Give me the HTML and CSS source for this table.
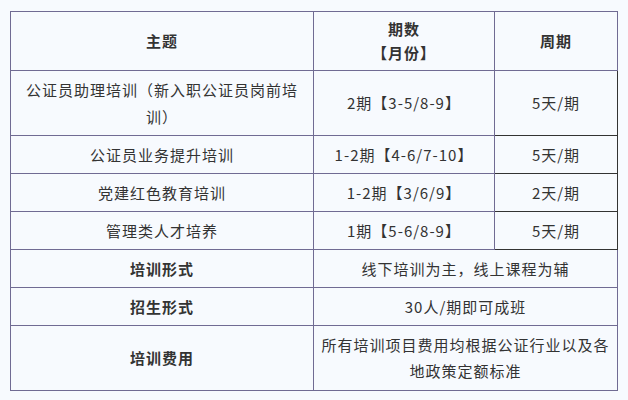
FILE: index.html
```html
<!DOCTYPE html>
<html lang="zh-CN">
<head>
<meta charset="utf-8">
<link rel="stylesheet" href="styles.css">
</head>
<body>
<table class="plan">
  <colgroup>
    <col class="c1">
    <col class="c2">
    <col class="c3">
  </colgroup>
  <tr class="head">
    <th>主题</th>
    <th>期数<br>【月份】</th>
    <th>周期</th>
  </tr>
  <tr class="tall">
    <td class="wide">公证员助理培训（新入职公证员岗前培训）</td>
    <td>2期【3-5/8-9】</td>
    <td class="dark">5天/期</td>
  </tr>
  <tr>
    <td>公证员业务提升培训</td>
    <td>1-2期【4-6/7-10】</td>
    <td class="dark">5天/期</td>
  </tr>
  <tr>
    <td>党建红色教育培训</td>
    <td>1-2期【3/6/9】</td>
    <td class="dark">2天/期</td>
  </tr>
  <tr>
    <td>管理类人才培养</td>
    <td>1期【5-6/8-9】</td>
    <td class="dark">5天/期</td>
  </tr>
  <tr>
    <td class="b">培训形式</td>
    <td colspan="2">线下培训为主，线上课程为辅</td>
  </tr>
  <tr>
    <td class="b">招生形式</td>
    <td colspan="2">30人/期即可成班</td>
  </tr>
  <tr class="tall">
    <td class="b">培训费用</td>
    <td colspan="2" class="merged">所有培训项目费用均根据公证行业以及各地政策定额标准</td>
  </tr>
</table>
</body>
</html>
```

FILE: styles.css
```css
html, body {
  margin: 0;
  background: #f7fafe;
}
body {
  padding: 11px 0 0 10px;
  font-family: "Noto Sans CJK SC", "Noto Sans", sans-serif;
  color: #333;
  font-size: 15px;
  letter-spacing: 1px;
}
.plan {
  border-collapse: collapse;
  table-layout: fixed;
  width: 607px;
}
.c1 { width: 303px; }
.c2 { width: 181px; }
.c3 { width: 123px; }
.plan th,
.plan td {
  border: 1px solid #706b93;
  padding: 5px 8px;
  text-align: center;
  vertical-align: middle;
  line-height: 26px;
  font-weight: normal;
}
.plan tr { height: 38px; }
.plan tr.head { height: 59px; }
.plan tr.tall { height: 65px; }
.plan th {
  font-weight: bold;
  line-height: 24px;
}
.plan td.b { font-weight: bold; }
.plan td.wide {
  padding: 5px 10px;
  line-height: 27px;
}
.plan td.merged { padding: 5px 6px; }
.plan td.dark {
  border-right-color: #333;
  border-bottom-color: #333;
}
```
